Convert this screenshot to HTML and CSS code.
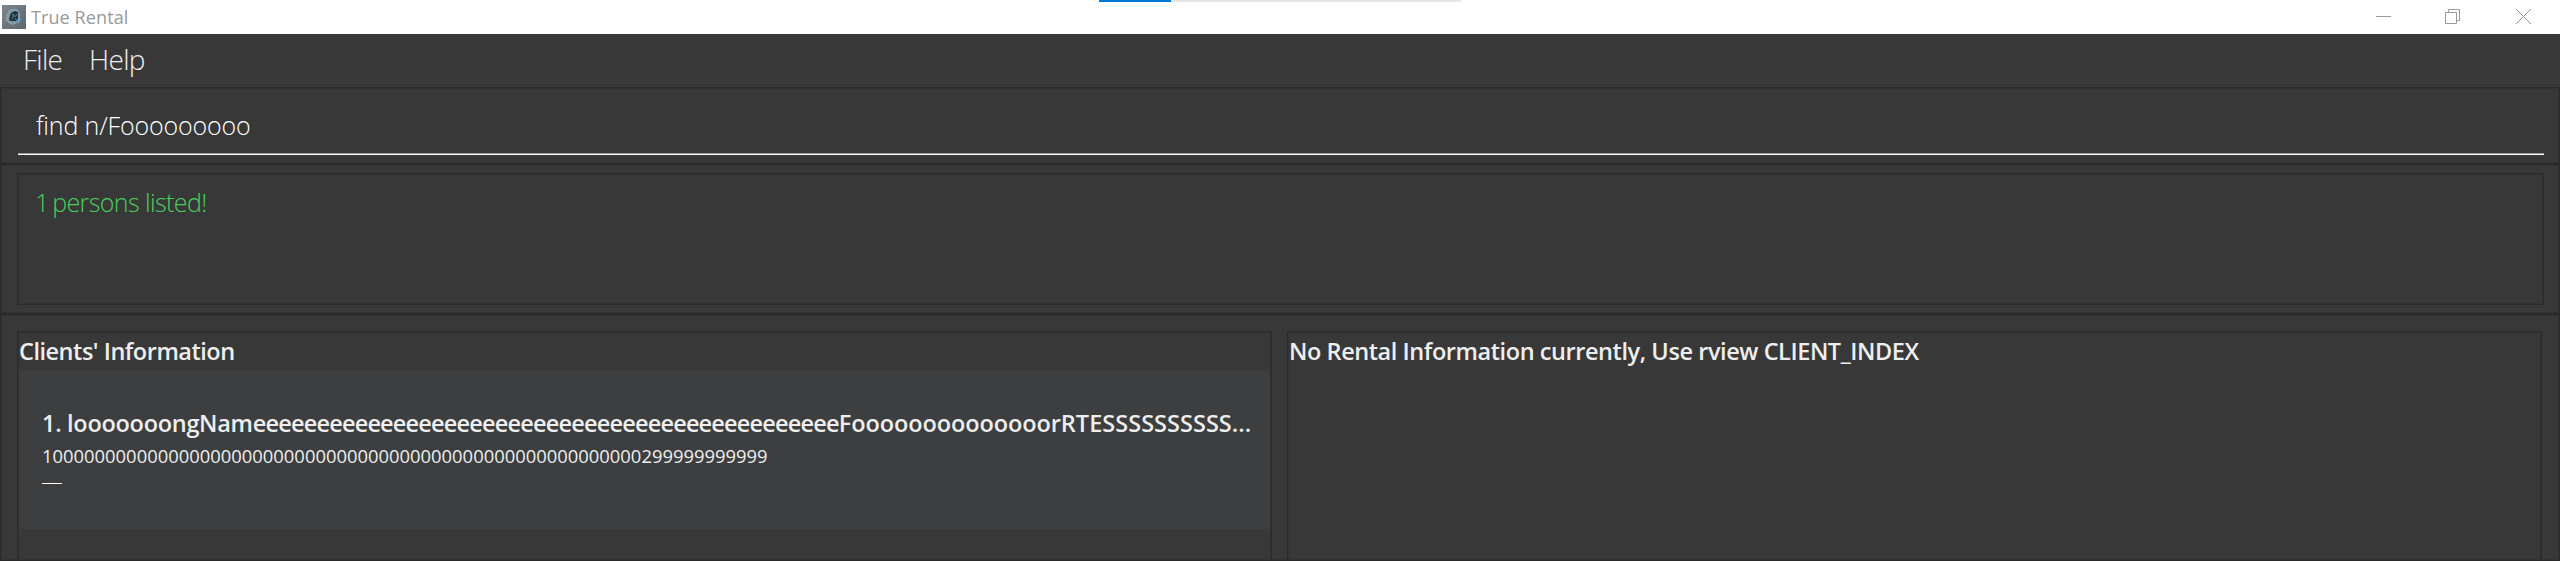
FILE: index.html
```html
<!DOCTYPE html>
<html lang="en">
<head>
<meta charset="utf-8">
<title>True Rental</title>
<link rel="stylesheet" href="styles.css">
</head>
<body>
<header class="titlebar">
  <svg class="app-icon" viewBox="0 0 24 24" width="24" height="24">
    <defs><linearGradient id="g" x1="0" y1="0" x2="1" y2="1"><stop offset="0" stop-color="#7d868b"/><stop offset="1" stop-color="#5d676e"/></linearGradient></defs>
    <rect width="24" height="24" fill="url(#g)"/>
    <path d="M7 6l2-1.500 2 .5 3-1 2 2 1.500 3v6l-2 2.500-3 1-2 1-3-1.500-2.500-2-.5-4 1-3z" fill="#7f97a3" stroke="#a9b8be" stroke-dasharray="1.500 1"/>
    <path d="M9 8l4-2 3 1v8l-2 1H8l-1-2z" fill="#1f333e"/>
    <path d="M10 10l2-.5-1 3-1.500 1M13 12l2-3M13.500 13.500l1 2" fill="none" stroke="#6f93a5" stroke-width=".9"/>
    <path d="M15.500 14H19l-2 4h-2z" fill="#58a5cf"/>
  </svg>
  <span class="app-name">True Rental</span>
  <div class="progress"><div class="progress-fill"></div></div>
  <div class="controls">
    <svg width="15" height="15" viewBox="0 0 15 15"><path d="M0 7.500h15"/></svg>
    <svg width="15" height="15" viewBox="0 0 15 15"><path d="M.5 3.500h11v11H.5zM3.500 3.500v-3h11v11h-3"/></svg>
    <svg class="close" width="15" height="15" viewBox="0 0 15 15"><path d="M0 0l15 15M15 0L0 15"/></svg>
  </div>
</header>
<nav class="menubar"><span>File</span><span>Help</span></nav>
<section class="pane command-pane"><div class="command">find n/Fooooooooo</div></section>
<section class="pane result-pane"><div class="box result"><span class="count">1 </span>persons listed!</div></section>
<main class="pane lists">
  <section class="box clients">
    <h2>Clients' Information</h2>
    <article class="card">
      <div class="name"><span class="name-start">1. looooooongNam</span><span class="name-run">eeeeeeeeeeeeeeeeeeeeeeeeeeeeeeeeeeeeeeeeeeeeee</span><span class="name-mid">Foooooooooooooor</span><span class="name-end">RTESSSSSSSSSS...</span></div>
      <div class="phone">100000000000000000000000000000000000000000000000000000000299999999999</div>
      <div class="tag"></div>
    </article>
  </section>
  <section class="box rentals"><h2 class="rentals-title">No Rental Information currently, Use rview CLIENT_INDEX</h2></section>
</main>
</body>
</html>
```
FILE: styles.css
```css
* { box-sizing: border-box; }
body { margin: 0; height: 561px; overflow: hidden; display: flex; flex-direction: column; background: #383838; font-family: "Open Sans", "Noto Sans", sans-serif; color: #eee; white-space: nowrap; }
.titlebar { position: relative; height: 34px; flex: none; display: flex; align-items: center; background: #fff; padding: 0 29px 0 2px; gap: 5px; }
.app-name { font-size: 18px; color: #999; letter-spacing: 0.1px; }
.progress { position: absolute; left: 1099px; top: 0; width: 362px; height: 2px; background: #e6e6e6; }
.progress-fill { width: 72px; height: 2px; background: #0078d7; }
.controls { margin-left: auto; display: flex; gap: 54px; padding-bottom: 1px; }
.controls svg { fill: none; stroke: #999; stroke-width: 1; }
.controls .close { margin-left: 2px; }
.menubar { height: 53px; flex: none; display: flex; padding-left: 23px; gap: 27px; font-size: 28px; line-height: 51px; font-weight: 300; letter-spacing: -0.75px; }
.pane { border: 1px solid #2a2a2a; box-shadow: inset 0 0 0 1px #323232; }
.command-pane { height: 77px; flex: none; padding: 0 15px 0 17px; }
.command { height: 67px; border-bottom: 1px solid #fff; box-shadow: inset 0 -1px #999; padding-left: 18px; font-size: 25px; font-weight: 300; line-height: 75px; color: #fff; letter-spacing: -0.15px; }
.result-pane { height: 150px; flex: none; padding: 8px 15px 8px 16px; }
.box { border: 1px solid #2a2a2a; box-shadow: inset 0 0 0 1px #323232; }
.result { height: 132px; padding: 10px 17px; color: #4bcf5c; font-size: 25px; font-weight: 300; line-height: 36px; letter-spacing: -0.6px; }
.count { letter-spacing: -1.8px; }
.lists { flex: 1; display: flex; gap: 15px; padding: 16px 17px 0 16px; }
.box.clients, .box.rentals { flex: 1 1 0; min-width: 0; padding: 1px; border-bottom: 0; }
h2 { margin: 0; height: 38px; font-size: 23.5px; line-height: 36px; font-weight: 600; letter-spacing: -0.48px; }
.rentals-title { letter-spacing: -0.43px; }
.card { height: 158px; background: #3c3e3f; padding: 36px 23px; }
.name { font-size: 23.5px; line-height: 32px; font-weight: 600; height: 32px; }
.name-start { letter-spacing: -0.29px; }
.name-run { letter-spacing: -0.8px; }
.name-mid { letter-spacing: -0.09px; }
.name-end { letter-spacing: 0.03px; }
.phone { font-size: 18.4px; line-height: 34px; }
.tag { width: 20px; height: 1px; margin-top: 10px; background: #fff; }
```
